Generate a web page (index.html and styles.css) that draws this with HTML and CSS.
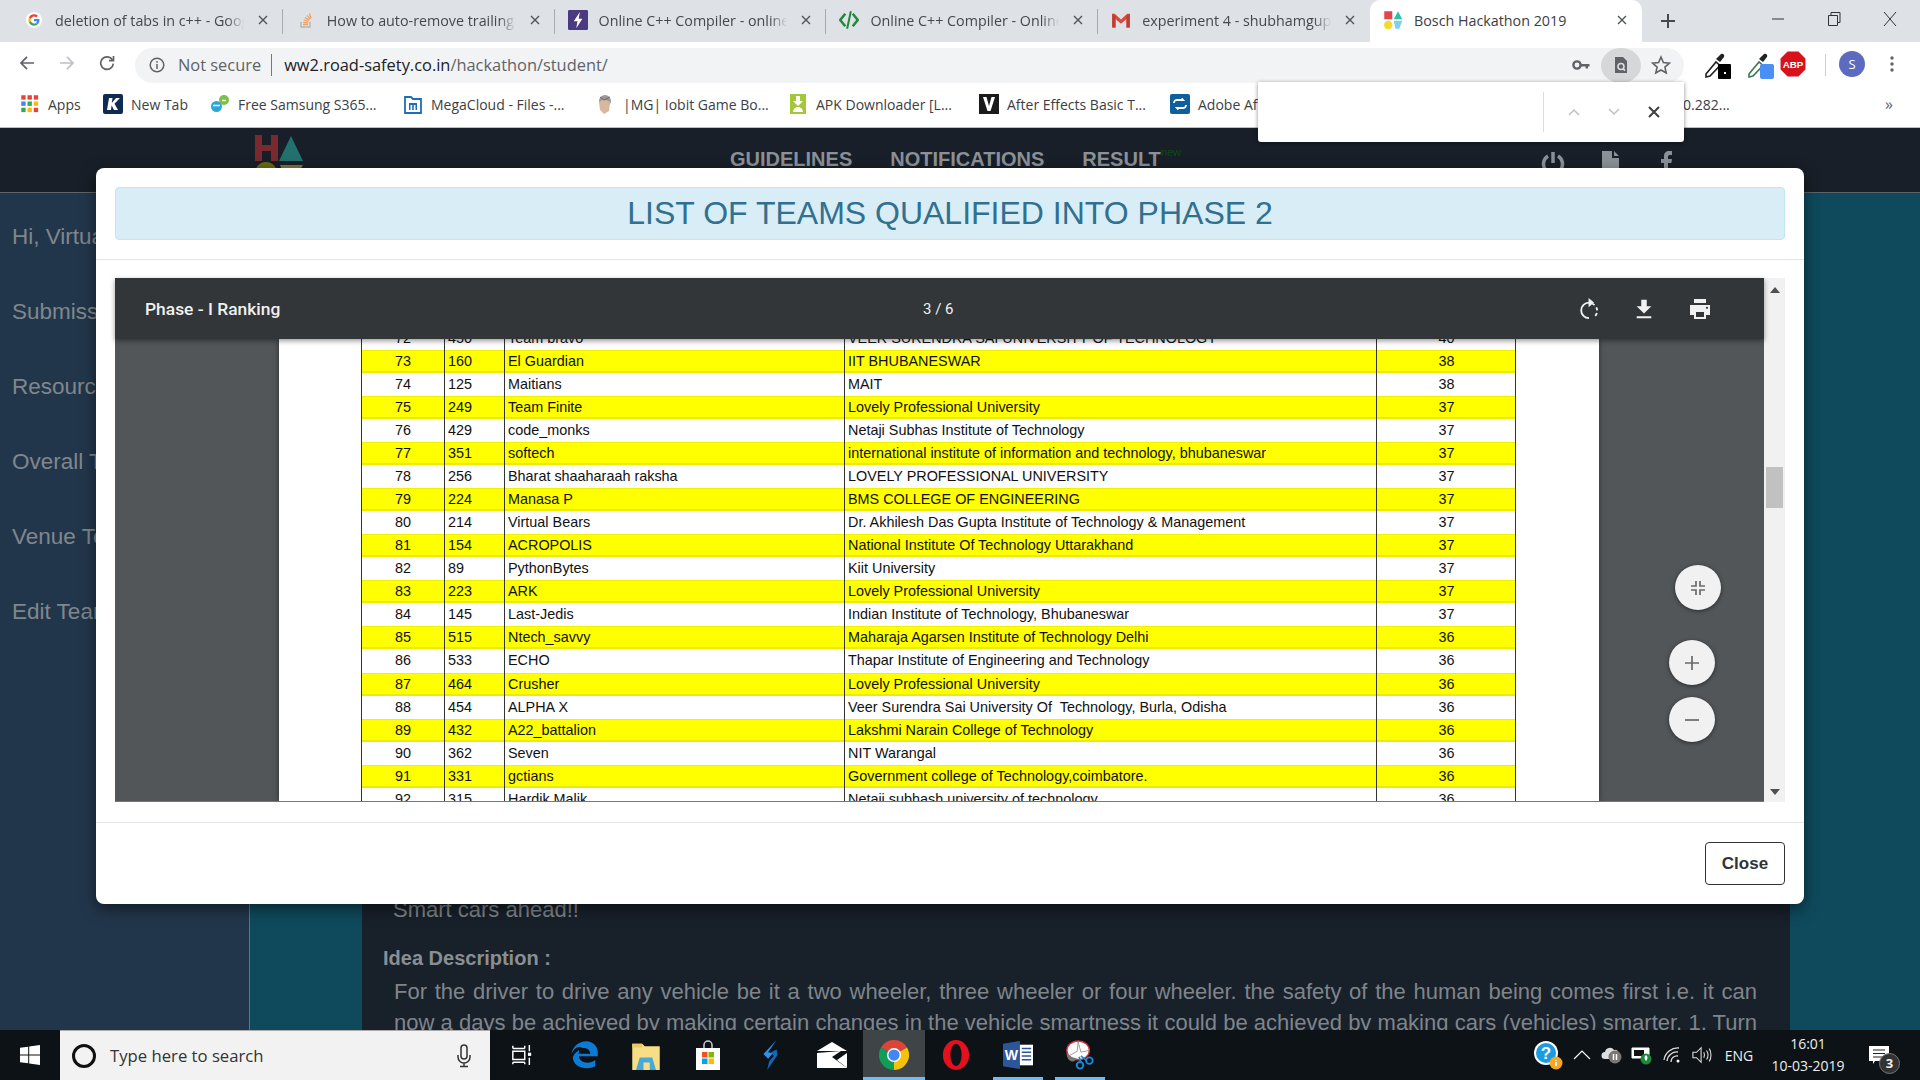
FILE: index.html
```html
<!DOCTYPE html>
<html lang="en">
<head>
<meta charset="utf-8">
<title>Bosch Hackathon 2019</title>
<link rel="stylesheet" href="styles.css">
</head>
<body>
<div class="browser">
  <div class="tabstrip">
    <div class="tab sep">
      <svg class="fav" viewBox="0 0 48 48"><circle cx="24" cy="24" r="24" fill="#fff"/><g transform="translate(7 7) scale(.71)"><path fill="#EA4335" d="M24 9.5c3.54 0 6.71 1.22 9.21 3.6l6.85-6.85C35.9 2.38 30.47 0 24 0 14.62 0 6.51 5.38 2.56 13.22l7.98 6.19C12.43 13.72 17.74 9.5 24 9.5z"/><path fill="#4285F4" d="M46.98 24.55c0-1.57-.15-3.09-.38-4.55H24v9.02h12.94c-.58 2.96-2.26 5.48-4.78 7.18l7.73 6c4.51-4.18 7.09-10.36 7.09-17.65z"/><path fill="#FBBC05" d="M10.53 28.59c-.48-1.45-.76-2.99-.76-4.59s.27-3.14.76-4.59l-7.98-6.19C.92 16.46 0 20.12 0 24c0 3.88.92 7.54 2.56 10.78l7.97-6.19z"/><path fill="#34A853" d="M24 48c6.48 0 11.93-2.13 15.89-5.81l-7.73-6c-2.15 1.45-4.92 2.3-8.16 2.3-6.26 0-11.57-4.22-13.47-9.91l-7.98 6.19C6.51 42.62 14.62 48 24 48z"/></g></svg>
      <span class="tab-title">deletion of tabs in c++ - Google Search</span>
      <svg class="tab-x" viewBox="0 0 10 10"><path d="M1 1l8 8M9 1l-8 8"/></svg>
    </div>
    <div class="tab sep">
      <svg class="fav" viewBox="0 0 16 16"><path d="M3 10v5h9v-5" fill="none" stroke="#b9b4ab" stroke-width="1.4"/><path d="M5 12.5h5M5.2 10.3l5 .5M5.8 8l4.8 1.4M7 5.6l4.3 2.5M9 3.4l3.5 3.6M11.4 1.6l1.8 4.4" fill="none" stroke="#f0a35e" stroke-width="1.3"/></svg>
      <span class="tab-title">How to auto-remove trailing whitespace</span>
      <svg class="tab-x" viewBox="0 0 10 10"><path d="M1 1l8 8M9 1l-8 8"/></svg>
    </div>
    <div class="tab sep">
      <svg class="fav fav-lg" viewBox="0 0 16 16"><rect width="16" height="16" rx="1" fill="#4b3a80"/><path d="M9.5 1.5L4.6 9h3l-1 5.5L11.5 7h-3z" fill="#fff"/></svg>
      <span class="tab-title">Online C++ Compiler - online editor</span>
      <svg class="tab-x" viewBox="0 0 10 10"><path d="M1 1l8 8M9 1l-8 8"/></svg>
    </div>
    <div class="tab sep">
      <svg class="fav fav-lg" viewBox="0 0 16 16" fill="none" stroke="#1f8a3b" stroke-width="2"><path d="M5 3L1 8l4 5M11 3l4 5-4 5"/><path d="M9.5 1L6.5 15" stroke-width="1.6"/></svg>
      <span class="tab-title">Online C++ Compiler - Online IDE</span>
      <svg class="tab-x" viewBox="0 0 10 10"><path d="M1 1l8 8M9 1l-8 8"/></svg>
    </div>
    <div class="tab">
      <svg class="fav fav-lg" viewBox="0 0 16 16"><path d="M1 3h2l5 4.5L13 3h2v11h-2.600V7.200L8 11 3.600 7.200V14H1z" fill="#d8493c"/><path d="M1 3l2.600 1.800V14H1zM15 3l-2.600 1.800V14H15z" fill="#c23b2e"/></svg>
      <span class="tab-title">experiment 4 - shubhamgupta</span>
      <svg class="tab-x" viewBox="0 0 10 10"><path d="M1 1l8 8M9 1l-8 8"/></svg>
    </div>
    <div class="tab tab-active">
      <svg class="fav fav-lg" viewBox="0 0 16 16"><rect x="1" y="1" width="6.400" height="6.400" fill="#e2454a"/><path d="M12 1l3.400 6.400H8.600z" fill="#2dbfa8"/><circle cx="4.200" cy="12" r="3.400" fill="#f0dc2c"/><path d="M8.600 8.600h6.800L13 15h-3z" fill="#7fd0e8"/></svg>
      <span class="tab-title">Bosch Hackathon 2019</span>
      <svg class="tab-x" viewBox="0 0 10 10"><path d="M1 1l8 8M9 1l-8 8"/></svg>
    </div>
    <svg class="newtab" viewBox="0 0 14 14"><path d="M7 0v14M0 7h14"/></svg>
    <div class="winctl">
      <svg viewBox="0 0 14 14"><path d="M1 7h12"/></svg>
      <svg viewBox="0 0 14 14"><path d="M1.500 3.500h9v10h-9zM4 3.500V.5h9v10h-2.500"/></svg>
      <svg viewBox="0 0 14 14"><path d="M1 0l12 14M13 0L1 14"/></svg>
    </div>
  </div>

  <div class="toolbar">
    <svg class="nav-ic" viewBox="0 0 16 16"><path d="M15 8H2M8 1.800L2 8l6 6.200"/></svg>
    <svg class="nav-ic nav-off" viewBox="0 0 16 16"><path d="M1 8h13M8 1.800L14 8l-6 6.200"/></svg>
    <svg class="nav-ic" viewBox="0 0 16 16"><path d="M13.500 5A6.300 6.300 0 1 0 14.300 8.600"/><path d="M14.500 1v4.600H10" /></svg>
    <div class="omnibox">
      <svg class="info" viewBox="0 0 16 16"><circle cx="8" cy="8" r="6.800"/><path d="M8 7v5M8 4v1.800"/></svg>
      <span class="secure">Not secure</span>
      <span class="omni-sep"></span>
      <span class="url">ww2.road-safety.co.in<span class="url-path">/hackathon/student/</span></span>
      <div class="omni-icons">
        <span class="omni-btn"><svg class="ic18" viewBox="0 0 18 18"><circle cx="5" cy="9" r="3.600" fill="none" stroke="#5f6368" stroke-width="2.400"/><path d="M8 8h9.500v2.400H16v2h-2.400v-2H8z" fill="#5f6368"/></svg></span>
        <span class="omni-btn omni-lens"><svg class="ic18" viewBox="0 0 18 18"><path d="M3 1h8l4 4v12H3z" fill="#5f6368"/><circle cx="9" cy="10.500" r="3" fill="none" stroke="#ddd" stroke-width="1.600"/><path d="M11 12.600l2 2" stroke="#ddd" stroke-width="1.600"/></svg></span>
        <span class="omni-btn"><svg class="ic20" viewBox="0 0 20 20"><path d="M10 2l2.400 5.500 6 .6-4.500 4 1.300 5.900L10 15l-5.200 3 1.300-5.900-4.500-4 6-.6z" fill="none" stroke="#5f6368" stroke-width="1.600"/></svg></span>
      </div>
    </div>
    <div class="ext ext-a"><svg class="ic28" viewBox="0 0 28 28"><path d="M3 23l10-12 4 3.500L7 25l-4 1z" fill="#fff" stroke="#222" stroke-width="1.600"/><path d="M13 8l5-5c2-1 4 1 3 3l-4 5z" fill="#222"/><rect x="15" y="13" width="13" height="15" rx="1" fill="#000"/><rect x="21" y="21" width="2" height="2" fill="#fff"/></svg></div>
    <div class="ext ext-b"><svg class="ic28" viewBox="0 0 28 28"><path d="M3 23l10-12 4 3.500L7 25l-4 1z" fill="#fff" stroke="#3c7a4c" stroke-width="1.600"/><path d="M13 8l5-5c2-1 4 1 3 3l-4 5z" fill="#222"/><rect x="14" y="13" width="14" height="15" rx="2" fill="#4a8ff5"/></svg></div>
    <div class="abp"><svg class="ic24" viewBox="0 0 24 24"><path d="M7 .5h10L23.500 7v10L17 23.500H7L.5 17V7z" fill="#d8121b"/><text x="12" y="15.500" class="abp-text">ABP</text></svg></div>
    <span class="ext-sep"></span>
    <span class="avatar">S</span>
    <svg class="dots" viewBox="0 0 4 18"><circle cx="2" cy="3" r="1.700"/><circle cx="2" cy="9" r="1.700"/><circle cx="2" cy="15" r="1.700"/></svg>
  </div>

  <div class="bookmarks">
    <div class="bm"><svg class="bm-ic" viewBox="0 0 16 16"><g fill="#ea4335"><rect x="1" y="1" width="3.500" height="3.500"/><rect x="6" y="1" width="3.500" height="3.500"/><rect x="11" y="1" width="3.500" height="3.500"/></g><rect x="1" y="6" width="3.500" height="3.500" fill="#4285f4"/><rect x="6" y="6" width="3.500" height="3.500" fill="#34a853"/><rect x="11" y="6" width="3.500" height="3.500" fill="#fbbc05"/><rect x="1" y="11" width="3.500" height="3.500" fill="#34a853"/><rect x="6" y="11" width="3.500" height="3.500" fill="#fbbc05"/><rect x="11" y="11" width="3.500" height="3.500" fill="#ea4335"/></svg>Apps</div>
    <div class="bm"><svg class="bm-ic" viewBox="0 0 20 20"><rect width="20" height="20" rx="2" fill="#0f2a55"/><path d="M6 4h3.500L8.800 9 13 4h4l-5.500 5.700L15 16h-4l-2.400-4.800L8 16H4z" fill="#fff"/></svg>New Tab</div>
    <div class="bm"><svg class="bm-ic" viewBox="0 0 20 20"><circle cx="6.500" cy="12.500" r="5.500" fill="#2aa6d8"/><circle cx="14" cy="6" r="5" fill="#7ac143"/><path d="M3 11.500h7" stroke="#fff" stroke-width="1.500"/><path d="M12 6.500h4" stroke="#fff" stroke-width="1.500"/></svg>Free Samsung S365...</div>
    <div class="bm"><svg class="bm-ic" viewBox="0 0 20 20"><path d="M2 3h6l2 2h8v14H2z" fill="#fff" stroke="#1d6fb5" stroke-width="1.800"/><path d="M6 9h8v7h-1.500v-5h-1.700v5H9.200v-5H7.500v5H6z" fill="#1d6fb5"/></svg>MegaCloud - Files -...</div>
    <div class="bm"><svg class="bm-ic" viewBox="0 0 20 20"><circle cx="10" cy="7" r="6" fill="#9a9a9a"/><path d="M4 8l5-3 6 3-1 9-5 3-4-4z" fill="#d9b79a"/><path d="M5 3l4 3 6-3" stroke="#666" fill="none"/></svg>|MG| Iobit Game Bo...</div>
    <div class="bm"><svg class="bm-ic" viewBox="0 0 20 20"><rect x="2" width="16" height="20" fill="#a4c639"/><path d="M8 2h4v5h3l-5 5-5-5h3z" fill="#fff"/><path d="M5 18a5 5 0 0 1 10 0z" fill="#fff"/></svg>APK Downloader [L...</div>
    <div class="bm"><svg class="bm-ic" viewBox="0 0 20 20"><rect width="20" height="20" fill="#1a1a1a"/><path d="M4 3h3.500L10 12l2.500-9H16l-4.500 14h-3z" fill="#fff"/></svg>After Effects Basic T...</div>
    <div class="bm"><svg class="bm-ic" viewBox="0 0 20 20"><rect width="20" height="20" rx="2" fill="#0f5f9e"/><path d="M4 8a3 3 0 0 1 3-2h6l-1.500-1.500M16 12a3 3 0 0 1-3 2H7l1.500 1.500M4 8v1M16 12v-1" stroke="#fff" stroke-width="1.800" fill="none"/></svg>Adobe After Effects</div>
    <div class="bm">0.282...</div>
    <div class="bm-more">»</div>
  </div>

  <div class="findbar">
    <span class="find-input"></span>
    <span class="find-sep"></span>
    <svg class="find-arrow" viewBox="0 0 12 8"><path d="M1 7l5-5 5 5"/></svg>
    <svg class="find-arrow" viewBox="0 0 12 8"><path d="M1 1l5 5 5-5"/></svg>
    <svg class="find-x" viewBox="0 0 12 12"><path d="M1 1l10 10M11 1L1 11"/></svg>
  </div>
</div>

<div class="page">
  <header class="site-header">
    <svg class="logo" viewBox="0 0 48 40"><path d="M0 0h7v10h9V0h7v26h-7V16H7v10H0z" fill="#7a2a2e"/><path d="M36 1l12 25H24z" fill="#23706e"/><circle cx="11" cy="38" r="11" fill="#6b6a10"/><path d="M25 30h23l-6 10H29z" fill="#7c7240"/></svg>
    <nav class="site-nav">
      <span>GUIDELINES</span>
      <span>NOTIFICATIONS</span>
      <span class="result">RESULT<sup class="new">new</sup></span>
    </nav>
    <div class="site-icons">
      <svg viewBox="0 0 24 24"><path d="M7 6a9.500 9.500 0 1 0 10 0" fill="none" stroke="#8b9197" stroke-width="3.500"/><path d="M12 2v11" stroke="#8b9197" stroke-width="3.500"/></svg>
      <svg viewBox="0 0 24 24"><path d="M4 1h10v7h7v15H4zM16 1l5 5h-5z" fill="#8b9197"/></svg>
      <svg viewBox="0 0 24 24"><path d="M9 24V13H6V9h3V6c0-3 2-5 5-5h3v4h-2c-1 0-2 .5-2 2v2h4l-.6 4H13v11z" fill="#8b9197"/></svg>
    </div>
  </header>
  <div class="site-main">
    <aside class="sidebar">
      <a>Hi, Virtual Bears</a>
      <a>Submission</a>
      <a>Resources</a>
      <a>Overall Teams</a>
      <a>Venue Teams</a>
      <a>Edit Team</a>
    </aside>
    <div class="gutter"></div>
    <section class="panel">
      <p class="idea-name">Smart cars ahead!!</p>
      <h4 class="idea-head">Idea Description :</h4>
      <p class="idea-text">For the driver to drive any vehicle be it a two wheeler, three wheeler or four wheeler. the safety of the human being comes first i.e. it can now a days be achieved by making certain changes in the vehicle smartness it could be achieved by making cars (vehicles) smarter. 1. Turn on the indicators automatically when the vehicle takes a turn.</p>
    </section>
    <div class="gutter-right"></div>
  </div>

  <div class="modal">
    <div class="modal-head">
      <div class="alert">LIST OF TEAMS QUALIFIED INTO PHASE 2</div>
    </div>
    <div class="modal-body">
      <div class="pdf">
        <div class="pdf-main">
          <div class="pdf-bar">
            <span class="pdf-title">Phase - I Ranking</span>
            <span class="pdf-pages">3 / 6</span>
            <svg class="pdf-ic pdf-rot" viewBox="0 0 24 24"><path d="M12 5A8.500 8.500 0 1 0 12 22" fill="none" stroke="#f1f1f1" stroke-width="2"/><path d="M15 6a8.500 8.500 0 0 1 3 14.500" fill="none" stroke="#f1f1f1" stroke-width="2" stroke-dasharray="3.500 3"/><path d="M11.500 0l6 5-6 5z" fill="#f1f1f1"/></svg>
            <svg class="pdf-ic pdf-dl" viewBox="0 0 24 24"><path d="M9 2h6v7h5l-8 8-8-8h5zM4 20h16v2.200H4z" fill="#f1f1f1"/></svg>
            <svg class="pdf-ic pdf-pr" viewBox="0 0 24 24"><path d="M6 2h12v4H6zM2 8h20v10h-4v4H6v-4H2zM8 15v5h8v-5z" fill="#f1f1f1"/><circle cx="19" cy="10.800" r="1.100" fill="#323639"/></svg>
          </div>
          <div class="pdf-view">
            <div class="pdf-sheet">
              <div class="sheet-table">
                <div class="tr"><span class="c">72</span><span>450</span><span>Team bravo</span><span>VEER SURENDRA SAI UNIVERSITY OF TECHNOLOGY</span><span class="c">40</span></div>
                <div class="tr hl"><span class="c">73</span><span>160</span><span>El Guardian</span><span>IIT BHUBANESWAR</span><span class="c">38</span></div>
                <div class="tr"><span class="c">74</span><span>125</span><span>Maitians</span><span>MAIT</span><span class="c">38</span></div>
                <div class="tr hl"><span class="c">75</span><span>249</span><span>Team Finite</span><span>Lovely Professional University</span><span class="c">37</span></div>
                <div class="tr"><span class="c">76</span><span>429</span><span>code_monks</span><span>Netaji Subhas Institute of Technology</span><span class="c">37</span></div>
                <div class="tr hl"><span class="c">77</span><span>351</span><span>softech</span><span>international institute of information and technology, bhubaneswar</span><span class="c">37</span></div>
                <div class="tr"><span class="c">78</span><span>256</span><span>Bharat shaaharaah raksha</span><span>LOVELY PROFESSIONAL UNIVERSITY</span><span class="c">37</span></div>
                <div class="tr hl"><span class="c">79</span><span>224</span><span>Manasa P</span><span>BMS COLLEGE OF ENGINEERING</span><span class="c">37</span></div>
                <div class="tr"><span class="c">80</span><span>214</span><span>Virtual Bears</span><span>Dr. Akhilesh Das Gupta Institute of Technology &amp; Management</span><span class="c">37</span></div>
                <div class="tr hl"><span class="c">81</span><span>154</span><span>ACROPOLIS</span><span>National Institute Of Technology Uttarakhand</span><span class="c">37</span></div>
                <div class="tr"><span class="c">82</span><span>89</span><span>PythonBytes</span><span>Kiit University</span><span class="c">37</span></div>
                <div class="tr hl"><span class="c">83</span><span>223</span><span>ARK</span><span>Lovely Professional University</span><span class="c">37</span></div>
                <div class="tr"><span class="c">84</span><span>145</span><span>Last-Jedis</span><span>Indian Institute of Technology, Bhubaneswar</span><span class="c">37</span></div>
                <div class="tr hl"><span class="c">85</span><span>515</span><span>Ntech_savvy</span><span>Maharaja Agarsen Institute of Technology Delhi</span><span class="c">36</span></div>
                <div class="tr"><span class="c">86</span><span>533</span><span>ECHO</span><span>Thapar Institute of Engineering and Technology</span><span class="c">36</span></div>
                <div class="tr hl"><span class="c">87</span><span>464</span><span>Crusher</span><span>Lovely Professional University</span><span class="c">36</span></div>
                <div class="tr"><span class="c">88</span><span>454</span><span>ALPHA X</span><span>Veer Surendra Sai University Of&nbsp; Technology, Burla, Odisha</span><span class="c">36</span></div>
                <div class="tr hl"><span class="c">89</span><span>432</span><span>A22_battalion</span><span>Lakshmi Narain College of Technology</span><span class="c">36</span></div>
                <div class="tr"><span class="c">90</span><span>362</span><span>Seven</span><span>NIT Warangal</span><span class="c">36</span></div>
                <div class="tr hl"><span class="c">91</span><span>331</span><span>gctians</span><span>Government college of Technology,coimbatore.</span><span class="c">36</span></div>
                <div class="tr"><span class="c">92</span><span>315</span><span>Hardik Malik</span><span>Netaji subhash university of technology</span><span class="c">36</span></div>
              </div>
            </div>
            <button class="fab fab-fit"><svg viewBox="0 0 16 16"><path d="M6 1v5H1M10 1v5h5M6 15v-5H1M10 15v-5h5"/></svg></button>
            <button class="fab fab-plus"><svg viewBox="0 0 16 16"><path d="M8 1v14M1 8h14"/></svg></button>
            <button class="fab fab-minus"><svg viewBox="0 0 16 16"><path d="M1 8h14"/></svg></button>
          </div>
        </div>
        <div class="pdf-scroll">
          <svg class="sb-arrow" viewBox="0 0 10 6"><path d="M5 0l5 6H0z"/></svg>
          <span class="sb-thumb"></span>
          <svg class="sb-arrow" viewBox="0 0 10 6"><path d="M5 6L0 0h10z"/></svg>
        </div>
      </div>
    </div>
    <div class="modal-foot">
      <button class="btn-close">Close</button>
    </div>
  </div>
</div>

<footer class="taskbar">
  <div class="start"><svg viewBox="0 0 20 20"><path d="M0 2.800l8.200-1.100v7.900H0zM9.200 1.500L20 0v9.600H9.200zM0 10.400h8.200v7.900L0 17.200zM9.200 10.400H20V20L9.200 18.500z" fill="#fff"/></svg></div>
  <div class="search">
    <span class="cortana"></span>
    <span class="search-text">Type here to search</span>
    <svg class="mic" viewBox="0 0 14 24"><rect x="4" y="1" width="6" height="14" rx="3" fill="none" stroke="#333" stroke-width="1.500"/><path d="M1 11v2a6 6 0 0 0 12 0v-2M7 19v3M3 22.500h8" fill="none" stroke="#333" stroke-width="1.500"/></svg>
  </div>
  <div class="tasks">
    <div class="task task-view"><svg viewBox="0 0 24 24" fill="none" stroke="#fff" stroke-width="1.600"><path d="M2 8h13v9H2zM2 2v3M15 2v3M2 20h13M2 20v2M15 20v2M2 5h13M20 1v7M20 15v8"/><rect x="18.500" y="9.500" width="3.500" height="3.500" fill="#fff" stroke="none"/></svg></div>
    <div class="task"><svg viewBox="0 0 24 24"><path d="M2 11C3 5 8 1 14 1c5 0 9 4 9 9v3H8c.3 5 8 7 13 3v5c-6 3-17 2-18-7 .5-2 2-4 5-6 0 1 0 2-.500 3H17c0-3-3-5-6-4.500C7 4 4 7 2 11z" fill="#0d7bd4"/></svg></div>
    <div class="task"><svg viewBox="0 0 24 24"><path d="M1 3h8l2 2h12v19H1z" fill="#f7de85"/><path d="M1 3h8v3H1z" fill="#e8c964"/><path d="M7 14h10l3 10H4z" fill="#4aa8d8"/><rect x="10" y="18" width="5" height="6" fill="#f7de85"/></svg></div>
    <div class="task"><svg viewBox="0 0 24 30"><path d="M8 9V5a4 4 0 0 1 8 0v4" fill="none" stroke="#ccc" stroke-width="1.500"/><rect y="8" width="24" height="22" fill="#fff"/><rect x="6" y="12" width="5.500" height="5.500" fill="#f25022"/><rect x="12.500" y="12" width="5.500" height="5.500" fill="#7fba00"/><rect x="6" y="18.500" width="5.500" height="5.500" fill="#00a4ef"/><rect x="12.500" y="18.500" width="5.500" height="5.500" fill="#ffb900"/></svg></div>
    <div class="task"><svg viewBox="0 0 16 32"><path d="M15 0L1 15l5 5 5-6-5-1z" fill="#2f90ea"/><path d="M15 10l1 6-11 16 2-9 5-6-3-4z" fill="#1468b8"/></svg></div>
    <div class="task"><svg viewBox="0 0 30 26"><path d="M15 0l15 9H0z" fill="#fff"/><path d="M0 11l24-2-9 6 15 11H0z" fill="#fff"/><path d="M30 11v15l-10-8z" fill="#fff"/></svg></div>
    <div class="task task-on"><svg viewBox="0 0 32 32"><path d="M16 16L2.140 8A16 16 0 0 1 29.860 8z" fill="#db4437"/><path d="M16 16L29.860 8A16 16 0 0 1 16 32z" fill="#f4c20d"/><path d="M16 16L16 32A16 16 0 0 1 2.140 8z" fill="#0f9d58"/><circle cx="16" cy="16" r="7.500" fill="#fff"/><circle cx="16" cy="16" r="6" fill="#4285f4"/></svg></div>
    <div class="task"><svg viewBox="0 0 28 32"><ellipse cx="14" cy="16" rx="14" ry="16" fill="#e3111d"/><ellipse cx="14" cy="16" rx="6" ry="12" fill="#0d1318"/></svg></div>
    <div class="task task-run"><svg viewBox="0 0 32 30"><path d="M0 3l18-3v30L0 27z" fill="#2b579a"/><path d="M18 4h14v22H18z" fill="#fff"/><path d="M20 8h10M20 12h10M20 16h10M20 20h10" stroke="#2b579a" stroke-width="1.500"/><text x="9" y="20" class="word-w">W</text></svg></div>
    <div class="task task-run"><svg viewBox="0 0 30 32"><ellipse cx="13" cy="11" rx="12" ry="10" fill="#fff" stroke="#d33" stroke-width="1.500"/><path d="M3 17l9-5 1-10 3 11 9-2" stroke="#999" fill="none"/><path d="M1 13c3 5 7 6 12 7l-5 3c-5 0-8-5-7-10z" fill="#777"/><circle cx="15" cy="27" r="3.500" fill="none" stroke="#1a8bd6" stroke-width="2"/><circle cx="25" cy="22" r="3.500" fill="none" stroke="#1a8bd6" stroke-width="2"/><path d="M16 24l-2-6M22 22l-6-5" stroke="#1a8bd6" stroke-width="1.800"/></svg></div>
  </div>
  <div class="tray">
    <div class="tray-item w34"><svg class="ic30" viewBox="0 0 30 30"><circle cx="13" cy="13" r="12" fill="#fff"/><circle cx="13" cy="13" r="10" fill="#1b9be0"/><text x="13" y="19" class="help-q">?</text><circle cx="23" cy="23" r="6.500" fill="#f5a623"/><path d="M23 22v4M23 20v1" stroke="#fff" stroke-width="1.600"/></svg></div>
    <div class="tray-item w34"><svg class="ic18" viewBox="0 0 18 10"><path d="M1 9l8-8 8 8" fill="none" stroke="#fff" stroke-width="1.200"/></svg></div>
    <div class="tray-item w26"><svg class="ic22" viewBox="0 0 22 20"><path d="M4 14a3.500 3.500 0 0 1 0-7 5 5 0 0 1 9-2 4 4 0 0 1 5 4H8v5z" fill="#ddd"/><circle cx="14" cy="12" r="6.500" fill="#777"/><path d="M12.500 9v6M15.500 9v6" stroke="#fff" stroke-width="1.500"/></svg></div>
    <div class="tray-item w34"><svg class="ic22" viewBox="0 0 22 20"><path d="M1 3h17v10H1z" fill="#fff" stroke="#fff"/><path d="M3 5h10v6H3z" fill="#111"/><circle cx="15" cy="14" r="5.500" fill="#1c8a3a"/><path d="M15 10c2 1.500 2 4 0 6-2-2-2-4.500 0-6z" fill="#fff"/></svg></div>
    <div class="tray-item w28"><svg class="ic20" viewBox="0 0 20 20" fill="none" stroke="#ddd" stroke-width="1.300"><path d="M1 15a14 14 0 0 1 15-12M4 16a10 10 0 0 1 11-9M8 17a6 6 0 0 1 7-6"/><circle cx="15" cy="16" r="1.500" fill="#fff" stroke="none"/></svg></div>
    <div class="tray-item w30"><svg class="ic20" viewBox="0 0 22 20" fill="none" stroke="#ddd" stroke-width="1.200"><path d="M1 7h4l5-5v16l-5-5H1zM13 7c1 2 1 4 0 6M16 5c2 3 2 7 0 10M19 3c2.500 4 2.500 10 0 14"/></svg></div>
    <div class="tray-item w44 tray-text">ENG</div>
    <div class="tray-item w94 clock"><span>16:01</span><span>10-03-2019</span></div>
    <div class="tray-item w50 notif"><svg class="ic22" viewBox="0 0 22 18"><path d="M0 0h20v15H6l-2 3v-3H0z" fill="#fff"/><path d="M4 4h12M4 7.500h12M4 11h12" stroke="#222" stroke-width="1.100"/></svg><span class="badge">3</span></div>
  </div>
</footer>
</body>
</html>
```
FILE: styles.css
```css
* { box-sizing: border-box; }
html, body { margin: 0; height: 100%; }
body {
  width: 1920px; height: 1080px; overflow: hidden;
  display: flex; flex-direction: column;
  font-family: "Liberation Sans", Arial, sans-serif;
  background: #000;
}
svg { display: block; flex: none; }
.ic18 { width: 18px; height: 18px; }
.ic20 { width: 20px; height: 20px; }
.ic22 { width: 22px; height: 20px; }
.ic24 { width: 26px; height: 26px; }
.ic28 { width: 28px; height: 28px; }
.ic30 { width: 30px; height: 30px; }

/* browser chrome */
.browser { position: relative; flex: none; height: 128px; background: #fff; font-family: "Open Sans", "Noto Sans", sans-serif; }
.tabstrip { height: 42px; background: #dee1e6; display: flex; align-items: stretch; padding-left: 11px; }
.tab { width: 271.8px; display: flex; align-items: center; padding: 0 15px 2px 15px; position: relative; font-size: 14.3px; color: #45494d; }
.tab.sep::after { content: ""; position: absolute; right: 0; top: 9px; bottom: 8px; width: 1px; background: #a7abb0; }
.tab-active { background: #fff; border-radius: 10px 10px 0 0; color: #3c4043; }
.fav { width: 16px; height: 16px; margin-right: 13px; }
.fav-lg { width: 20px; height: 20px; margin: 0 11px 0 -2px; }
.tab-title { flex: 1; min-width: 0; white-space: nowrap; overflow: hidden; -webkit-mask-image: linear-gradient(to right, #000 90%, transparent 99%); mask-image: linear-gradient(to right, #000 90%, transparent 99%); }
.tab-active .tab-title { -webkit-mask-image: none; mask-image: none; }
.tab-x { width: 10px; height: 10px; margin-left: 12px; fill: none; stroke: #50555a; stroke-width: 1.4; }
.newtab { width: 14px; height: 14px; margin: 14px 0 0 19px; fill: none; stroke: #454a50; stroke-width: 2; }
.winctl { margin-left: auto; display: flex; gap: 42px; padding: 12px 23px 0 0; }
.winctl svg { width: 14px; height: 14px; fill: none; stroke: #333; stroke-width: 1; }

.toolbar { height: 41px; display: flex; align-items: center; padding: 0 0 0 7px; }
.nav-ic { width: 40px; height: 16px; fill: none; stroke: #5f6368; stroke-width: 1.7; }
.nav-off { stroke: #bdc1c6; }
.omnibox { margin-left: 8px; width: 1549px; height: 35px; margin-top: 5px; border-radius: 18px; background: #f1f3f4; display: flex; align-items: center; padding: 0 3px 0 12px; font-size: 16.4px; }
.info { width: 20px; height: 16px; fill: none; stroke: #5f6368; stroke-width: 1.500; }
.secure { margin: 0 0 2px 11px; color: #5f6368; }
.omni-sep { width: 1px; height: 22px; background: #777; margin: 0 12px 0 10px; }
.url { color: #202124; margin-bottom: 2px; }
.url-path { color: #5f6368; }
.omni-icons { margin-left: auto; display: flex; align-items: center; }
.omni-btn { width: 40px; height: 35px; display: flex; align-items: center; justify-content: center; }
.omni-lens { background: #d5d7d8; border-radius: 50%; }
.ext { height: 41px; display: flex; align-items: center; justify-content: center; margin-top: 5px; }
.ext-a { margin-left: 10px; width: 46px; }
.ext-b { width: 40px; }
.abp { width: 26px; margin-top: 3px; }
.abp-text { font: bold 9px "Liberation Sans", sans-serif; fill: #fff; text-anchor: middle; }
.ext-sep { width: 1px; height: 22px; background: #ccc; margin: 4px 13px 0 19px; }
.avatar { width: 26px; height: 26px; border-radius: 50%; background: #5c6bc0; color: #fff; font-size: 13px; display: flex; align-items: center; justify-content: center; margin-top: 2px; }
.dots { width: 4px; height: 18px; margin: 2px 0 0 25px; fill: #5f6368; }

.bookmarks { height: 45px; display: grid; grid-template-columns: 83px 107px 193px 192px 193px 191px 191px 513px 202px 1fr; padding: 0 0 2px 20px; align-items: center; border-bottom: 1px solid #bdbdbd; font-size: 14px; color: #3c4043; }
.bm { display: flex; align-items: center; gap: 8px; white-space: nowrap; }
.bm-ic { width: 20px; height: 20px; }
.bm-more { color: #5f6368; font-size: 16px; }

.findbar { position: absolute; left: 1258px; top: 82px; width: 426px; height: 60px; background: #fff; border-radius: 0 0 3px 3px; box-shadow: 0 1px 4px rgba(0,0,0,.45); display: flex; align-items: center; z-index: 5; }
.find-input { width: 285px; }
.find-sep { width: 1px; height: 40px; background: #dadce0; }
.find-arrow { width: 12px; height: 8px; margin-left: 24px; fill: none; stroke: #bdc1c6; stroke-width: 1.500; }
.find-arrow + .find-arrow { margin-left: 28px; }
.find-x { width: 12px; height: 12px; margin-left: 28px; fill: none; stroke: #3c4043; stroke-width: 2; }

/* page behind dialog */
.page { position: relative; flex: none; height: 902px; overflow: hidden; background: #0e4a5c; color: #80878c; display: flex; flex-direction: column; }
.site-header { height: 65px; background: #181f28; border-bottom: 1px solid #5d6569; display: flex; padding: 0 241px 0 255px; flex: none; }
.logo { width: 48px; height: 40px; margin-top: 7px; }
.site-nav { display: flex; gap: 38px; margin-left: 427px; font-weight: bold; font-size: 20px; padding-top: 20px; color: #8b9197; white-space: nowrap; }
.result { position: relative; }
.new { position: absolute; left: 100%; top: -1px; font-size: 11px; font-weight: normal; color: #0d4d10; line-height: 1; }
.site-icons { display: flex; gap: 33px; margin-left: auto; padding-top: 22px; }
.site-icons svg { width: 24px; height: 24px; }
.site-main { flex: 1; display: flex; min-height: 0; }
.sidebar { width: 250px; background: #22364b; border-right: 1px solid #62757f; padding: 31px 0 0 12px; display: flex; flex-direction: column; gap: 50px; font-size: 22.5px; overflow: hidden; white-space: nowrap; color: #80878c; flex: none; }
.sidebar a { line-height: 25px; }
.gutter { width: 112px; flex: none; }
.panel { width: 1428px; flex: none; background: #18202a; padding: 705px 33px 0 20px; font-size: 22px; color: #7f858a; }
.idea-name { margin: 0 0 0 11px; line-height: 24px; }
.idea-head { margin: 24px 0 0 1px; font-size: 20px; line-height: 24px; color: #8a8f93; }
.idea-text { margin: 7px 0 0 12px; line-height: 30.500px; text-align: justify; }
.gutter-right { flex: 1; }

/* dialog */
.modal { position: absolute; left: 96px; top: 40px; width: 1708px; height: 736px; background: #fff; border-radius: 8px; box-shadow: 0 5px 15px rgba(0,0,0,.5); display: flex; flex-direction: column; }
.modal-head { padding: 19px; border-bottom: 1px solid #e5e5e5; }
.alert { height: 53px; background: #d9edf7; border: 1px solid #bce8f1; border-radius: 4px; color: #31708f; font-size: 32px; line-height: 50px; text-align: center; }
.modal-body { padding: 18px 19px 20px; }
.pdf { height: 524px; display: flex; }
.pdf-main { width: 1649px; display: flex; flex-direction: column; }
.pdf-bar { height: 61px; background: #323639; display: flex; align-items: center; color: #f1f1f1; font-family: Roboto, sans-serif; font-size: 16px; position: relative; z-index: 2; box-shadow: 0 2px 5px rgba(0,0,0,.4); flex: none; }
.pdf-title { margin-left: 30px; font-weight: 500; font-size: 17.4px; width: 778px; }
.pdf-pages { width: 30px; white-space: nowrap; font-size: 15px; }
.pdf-ic { width: 22px; height: 22px; }
.pdf-rot { margin-left: 625px; }
.pdf-dl { margin-left: 33px; }
.pdf-pr { margin-left: 33px; width: 24px; height: 24px; }
.pdf-view { flex: 1; background: #525659; position: relative; overflow: hidden; padding: 0 165px 0 164px; border-bottom: 1px solid #777; }
.pdf-sheet { width: 1320px; height: 100%; background: #fff; padding-left: 82px; overflow: hidden; box-shadow: 0 0 5px rgba(0,0,0,.5); }
.sheet-table { width: 1155px; margin-top: -12.400px; border-right: 1px solid #333; font-family: "Liberation Sans", Arial, sans-serif; font-size: 14.4px; color: #111; }
.tr { display: grid; grid-template-columns: 83px 60px 340px 532px 140px; height: 23.070px; align-items: stretch; line-height: 23px; white-space: nowrap; }
.tr span { border-left: 1px solid #333; padding-left: 3px; overflow: hidden; }
.tr .c { padding: 0; text-align: center; }
.tr.hl { background: #ffff00; box-shadow: inset 0 -2px 0 #ecec00, inset 0 1px 0 #f0f000; }
.fab { position: absolute; width: 46px; height: 45px; border-radius: 50%; border: 0; padding: 0; background: #f1f1f1; box-shadow: 0 1px 4px rgba(0,0,0,.5); display: flex; align-items: center; justify-content: center; }
.fab svg { width: 16px; height: 16px; fill: none; stroke: #6a6a6a; stroke-width: 1.700; }
.fab-fit { left: 1560px; top: 226px; }
.fab-plus { left: 1554px; top: 301px; }
.fab-minus { left: 1554px; top: 358px; }
.pdf-scroll { width: 21px; background: #f1f1f1; display: flex; flex-direction: column; align-items: center; padding: 9px 0 7px; position: relative; }
.sb-arrow { width: 10px; height: 6px; fill: #505050; }
.sb-thumb { width: 17px; height: 41px; background: #c1c1c1; margin-top: 174px; }
.sb-arrow + .sb-thumb + .sb-arrow { margin-top: auto; }
.modal-foot { border-top: 1px solid #e5e5e5; flex: 1; padding: 19px; display: flex; justify-content: flex-end; align-items: flex-start; }
.btn-close { width: 80px; height: 43px; background: #fff; border: 1px solid #333; border-radius: 4px; font: bold 17px "Liberation Sans", sans-serif; color: #333; }

/* taskbar */
.taskbar { flex: 1; height: 50px; background: #0c1216; display: flex; align-items: stretch; color: #fff; font-family: "Open Sans", "Noto Sans", sans-serif; }
.start { width: 60px; display: flex; align-items: center; justify-content: center; }
.start svg { width: 20px; height: 20px; }
.search { width: 430px; background: #f2f2f2; border-top: 1px solid #aaa; display: flex; align-items: center; padding-left: 12px; color: #333; font-size: 16.7px; }
.cortana { width: 24px; height: 24px; border: 3px solid #111; border-radius: 50%; margin-right: 14px; }
.search-text { flex: 1; }
.mic { width: 14px; height: 24px; margin-right: 19px; }
.tasks { display: flex; margin-left: 1px; }
.task { width: 62px; display: flex; align-items: center; justify-content: center; position: relative; }
.task svg { width: 30px; height: 30px; }
.task-view svg { width: 22px; height: 22px; }
.task-on { background: #3f4547; }
.task-on::after, .task-run::after { content: ""; position: absolute; left: 0; right: 0; bottom: 0; height: 3px; background: #76b9ed; }
.task-run::after { left: 6px; right: 6px; }
.word-w { font: bold 15px "Liberation Sans", sans-serif; fill: #fff; text-anchor: middle; }
.tray { margin-left: auto; display: flex; padding-right: 15px; align-items: stretch; font-size: 14px; color: #eee; }
.tray-item { display: flex; align-items: center; justify-content: center; position: relative; }
.w26 { width: 26px; } .w28 { width: 28px; } .w30 { width: 30px; } .w34 { width: 34px; }
.w44 { width: 44px; } .w50 { width: 50px; } .w94 { width: 94px; }
.help-q { font: bold 17px "Liberation Sans", sans-serif; fill: #fff; text-anchor: middle; }
.clock { flex-direction: column; gap: 4px; line-height: 18px; }
.badge { position: absolute; left: 24px; top: 23px; width: 21px; height: 21px; border-radius: 50%; background: #333; border: 1px solid #777; font-size: 13px; font-weight: bold; text-align: center; line-height: 19px; }
```
